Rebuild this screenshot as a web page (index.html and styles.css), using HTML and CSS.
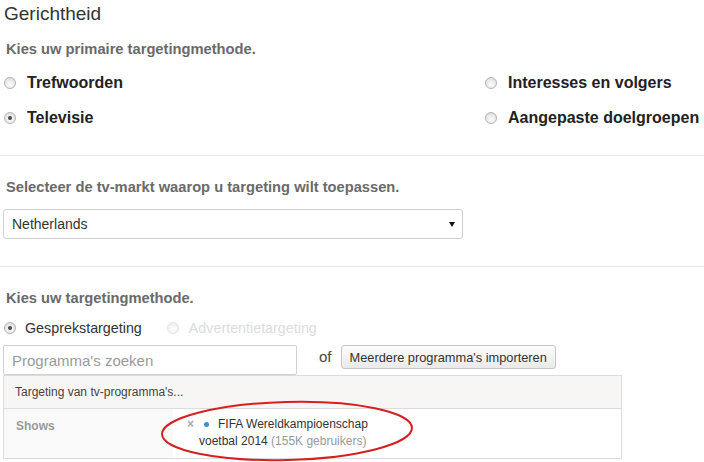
FILE: index.html
```html
<!DOCTYPE html>
<html lang="nl">
<head>
<meta charset="utf-8">
<title>Gerichtheid</title>
<link rel="stylesheet" href="styles.css">
</head>
<body>
<main class="page">
  <h1 class="title">Gerichtheid</h1>

  <section class="section">
    <h2 class="label label-first">Kies uw primaire targetingmethode.</h2>
    <div class="primary-grid">
      <label class="choice"><span class="radio"></span>Trefwoorden</label>
      <label class="choice"><span class="radio"></span>Interesses en volgers</label>
      <label class="choice"><span class="radio checked"></span>Televisie</label>
      <label class="choice"><span class="radio"></span>Aangepaste doelgroepen</label>
    </div>
  </section>

  <hr class="divider divider-one">

  <section class="section">
    <h2 class="label">Selecteer de tv-markt waarop u targeting wilt toepassen.</h2>
    <div class="select">
      <span class="select-value">Netherlands</span>
      <span class="caret"></span>
    </div>
  </section>

  <hr class="divider divider-two">

  <section class="section">
    <h2 class="label">Kies uw targetingmethode.</h2>
    <div class="method-row">
      <label class="method"><span class="radio checked"></span>Gesprekstargeting</label>
      <label class="method disabled"><span class="radio"></span>Advertentietargeting</label>
    </div>
    <div class="search-row">
      <input class="search" type="text" placeholder="Programma's zoeken">
      <span class="or">of</span>
      <button class="button" type="button">Meerdere programma's importeren</button>
    </div>
    <div class="panel">
      <div class="panel-head">Targeting van tv-programma's...</div>
      <div class="panel-row">
        <div class="row-label">Shows</div>
        <div class="row-value">
          <div class="item"><span class="remove">×</span><span class="dot"></span>FIFA Wereldkampioenschap voetbal 2014 <span class="muted">(155K gebruikers)</span></div>
        </div>
      </div>
      <svg class="highlight" width="264" height="70" viewBox="0 0 264 70" aria-hidden="true">
        <ellipse cx="130" cy="34" rx="125" ry="29" transform="rotate(-1.5 130 34)" fill="none" stroke="#d42020" stroke-width="2"/>
      </svg>
    </div>
  </section>
</main>
</body>
</html>
```

FILE: styles.css
```css
html, body {
  margin: 0;
  padding: 0;
  background: #fff;
}

body {
  font-family: "Liberation Sans", Arial, sans-serif;
  color: #333;
  height: 462px;
  overflow: hidden;
}

.title {
  margin: 0;
  padding-left: 4px;
  font-size: 19px;
  font-weight: normal;
  line-height: 28px;
  color: #333;
}

.section {
  padding-left: 3px;
}

.label {
  margin: 21px 0 0;
  padding-left: 3px;
  font-size: 14.7px;
  font-weight: bold;
  line-height: 20px;
  color: #6a6a6a;
}

.label-first {
  margin-top: 11px;
}

.primary-grid {
  display: grid;
  grid-template-columns: 481px auto;
  grid-auto-rows: 35px;
  margin-top: 6px;
  padding-left: 1px;
}

.choice {
  display: flex;
  align-items: center;
  gap: 11px;
  font-size: 16px;
  font-weight: bold;
  color: #222;
}

.radio {
  position: relative;
  flex: none;
  width: 12px;
  height: 12px;
  box-sizing: border-box;
  border: 1px solid #b4b4b4;
  border-radius: 50%;
  background: radial-gradient(circle at 50% 65%, #fbfbfb 0%, #e9e9e9 55%, #d2d2d2 100%);
}

.radio.checked::after {
  content: "";
  position: absolute;
  left: 3px;
  top: 3px;
  width: 4px;
  height: 4px;
  border-radius: 50%;
  background: #4a4a4a;
}

.divider {
  border: 0;
  border-top: 1px solid #e8e8e8;
  margin: 0;
  height: 0;
}

.divider-one {
  margin-top: 20px;
}

.divider-two {
  margin-top: 27px;
}

.select {
  display: flex;
  align-items: center;
  justify-content: space-between;
  width: 460px;
  height: 30px;
  box-sizing: border-box;
  margin-top: 12px;
  padding: 0 7px 0 8px;
  border: 1px solid #cfcfcf;
  border-radius: 3px;
  font-size: 14px;
  color: #333;
}

.caret {
  width: 0;
  height: 0;
  border-left: 3px solid transparent;
  border-right: 3px solid transparent;
  border-top: 5px solid #111;
  margin-top: 1px;
}

.method-row {
  display: flex;
  align-items: center;
  height: 20px;
  margin-top: 10px;
  padding-left: 1px;
  font-size: 14.3px;
}

.method {
  display: flex;
  align-items: center;
  gap: 9px;
  color: #333;
}

.method.disabled {
  margin-left: 25px;
  gap: 10px;
  color: #dcdcdc;
}

.method.disabled .radio {
  border-color: #e2e2e2;
  background: radial-gradient(circle at 50% 65%, #fdfdfd 0%, #f3f3f3 60%, #e8e8e8 100%);
}

.search-row {
  display: flex;
  align-items: flex-start;
  margin-top: 7px;
}

.search {
  width: 294px;
  height: 30px;
  box-sizing: border-box;
  margin: 0;
  padding: 0 8px;
  border: 1px solid #d0d0d0;
  border-radius: 2px;
  font-family: inherit;
  font-size: 15px;
  color: #333;
  outline: none;
}

.search::placeholder {
  color: #9a9a9a;
}

.or {
  margin-left: 22px;
  line-height: 24px;
  font-size: 15px;
  color: #444;
}

.button {
  height: 24px;
  margin: 0 0 0 9px;
  padding: 0 8px;
  box-sizing: border-box;
  border: 1px solid #c6c6c6;
  border-radius: 3px;
  background: linear-gradient(#fdfdfd, #e9e9e9);
  font-family: inherit;
  font-size: 12.8px;
  color: #333;
}

.panel {
  position: relative;
  width: 619px;
  box-sizing: border-box;
  border: 1px solid #dcdcdc;
}

.panel-head {
  height: 32px;
  padding-left: 11px;
  line-height: 32px;
  font-size: 12px;
  color: #444;
  background: #f8f5f5;
  border-bottom: 1px solid #dcdcdc;
}

.panel-row {
  display: grid;
  grid-template-columns: 169px 1fr;
  height: 49px;
}

.row-label {
  padding: 9px 0 0 12px;
  font-size: 12px;
  font-weight: bold;
  line-height: 16px;
  color: #999;
  background: #f9f9f9;
}

.row-value {
  padding: 7px 0 0 14px;
}

.item {
  width: 190px;
  padding-left: 12px;
  text-indent: -12px;
  font-size: 12px;
  line-height: 17px;
  color: #333;
}

.remove {
  font-weight: bold;
  color: #aaa;
}

.dot {
  display: inline-block;
  width: 5px;
  height: 5px;
  margin: 0 9px 1px 10px;
  border-radius: 50%;
  background: #3a8fd9;
  vertical-align: middle;
}

.muted {
  color: #999;
}

.highlight {
  position: absolute;
  left: 153px;
  top: 21px;
  overflow: visible;
  pointer-events: none;
}
```
